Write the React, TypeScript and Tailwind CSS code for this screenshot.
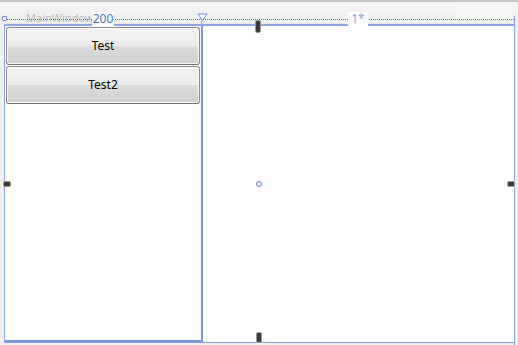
function Handle({ className }: { className: string }) {
  return <div className={`absolute rounded-[2px] bg-[#3a3a3a] border border-[#9a9a9a] ${className}`}></div>;
}

function AeroButton({ label }: { label: string }) {
  return (
    <div className="h-[38px] rounded-[3px] border border-[#8a8a8a] border-b-[#6f6f6f] bg-[linear-gradient(#f3f3f3_0%,#ebebeb_50%,#dddddd_50%,#cfcfcf_100%)] flex items-center justify-center text-[12px] text-black shadow-[inset_0_0_0_1px_#fcfcfc]">
      {label}
    </div>
  );
}

export default function App() {
  return (
    <div className="relative w-[518px] h-[345px] overflow-hidden bg-[#f0f0f0] font-['Noto_Sans',sans-serif]">
      {/* title strip */}
      <div className="h-[24px] border-t-2 border-[#c9c9c9] bg-[linear-gradient(#f5f5f5,#ececec)] flex items-start justify-between pl-[26px] pr-[6px] pt-[10px]">
        <span className="text-[11px] leading-none text-[#bdbdbd]">MainWindow</span>
        <div className="w-[56px] h-[14px] -mt-[6px] bg-[#f6f6f6]"></div>
      </div>

      {/* window client area */}
      <div className="ml-[4px] mr-[3px] h-[318px] bg-white border-x border-t-2 border-[#8ca6e4] flex">
        <div className="w-[198px] border-r-2 border-b-2 border-[#7a96de] flex flex-col gap-px pt-px px-px">
          <AeroButton label="Test" />
          <AeroButton label="Test2" />
        </div>
        <div className="flex-1"></div>
      </div>
      <div className="ml-[4px] mr-[3px] h-[1px] bg-[#8ca6e4]"></div>

      {/* grid ruler adorner */}
      <div className="absolute left-[4px] right-[4px] top-[19px] border-t border-dotted border-[#5a7ad0]"></div>
      <div className="absolute left-[4px] right-[4px] top-[12px] h-[14px] flex">
        <div className="relative w-[198px] flex justify-center">
          <span className="bg-white px-px text-[12px] leading-[14px] text-[#4a6fd0]">200</span>
          <svg className="absolute -right-[6px] top-px" width="11" height="9" viewBox="0 0 11 9">
            <path d="M1 1 L10 1 L5.5 7.5 Z" fill="white" stroke="#6d8ddc" strokeWidth="1" />
          </svg>
        </div>
        <div className="flex-1 flex justify-center">
          <span className="bg-white px-[3px] text-[12px] leading-[14px] text-[#8ea4dc]">1*</span>
        </div>
      </div>
      <div className="absolute left-[2px] top-[16px] w-[5px] h-[5px] border border-[#7090d8] bg-white rounded-[1px]"></div>
      <div className="absolute left-[201px] top-[21px] w-px h-[4px] bg-[#8ca6e4]"></div>
      <div className="absolute right-[3px] top-[16px] w-px h-[329px] bg-[#8ca6e4]"></div>

      {/* resize handles */}
      <Handle className="left-[255px] top-[20px] w-[6px] h-[13px]" />
      <Handle className="left-[3px] top-[181px] w-[8px] h-[6px]" />
      <Handle className="left-[507px] top-[181px] w-[8px] h-[6px]" />
      <Handle className="left-[256px] top-[332px] w-[6px] h-[11px]" />
      <div className="absolute left-[256px] top-[181px] w-[6px] h-[6px] rounded-full border border-[#5a7ad0]"></div>
    </div>
  );
}
